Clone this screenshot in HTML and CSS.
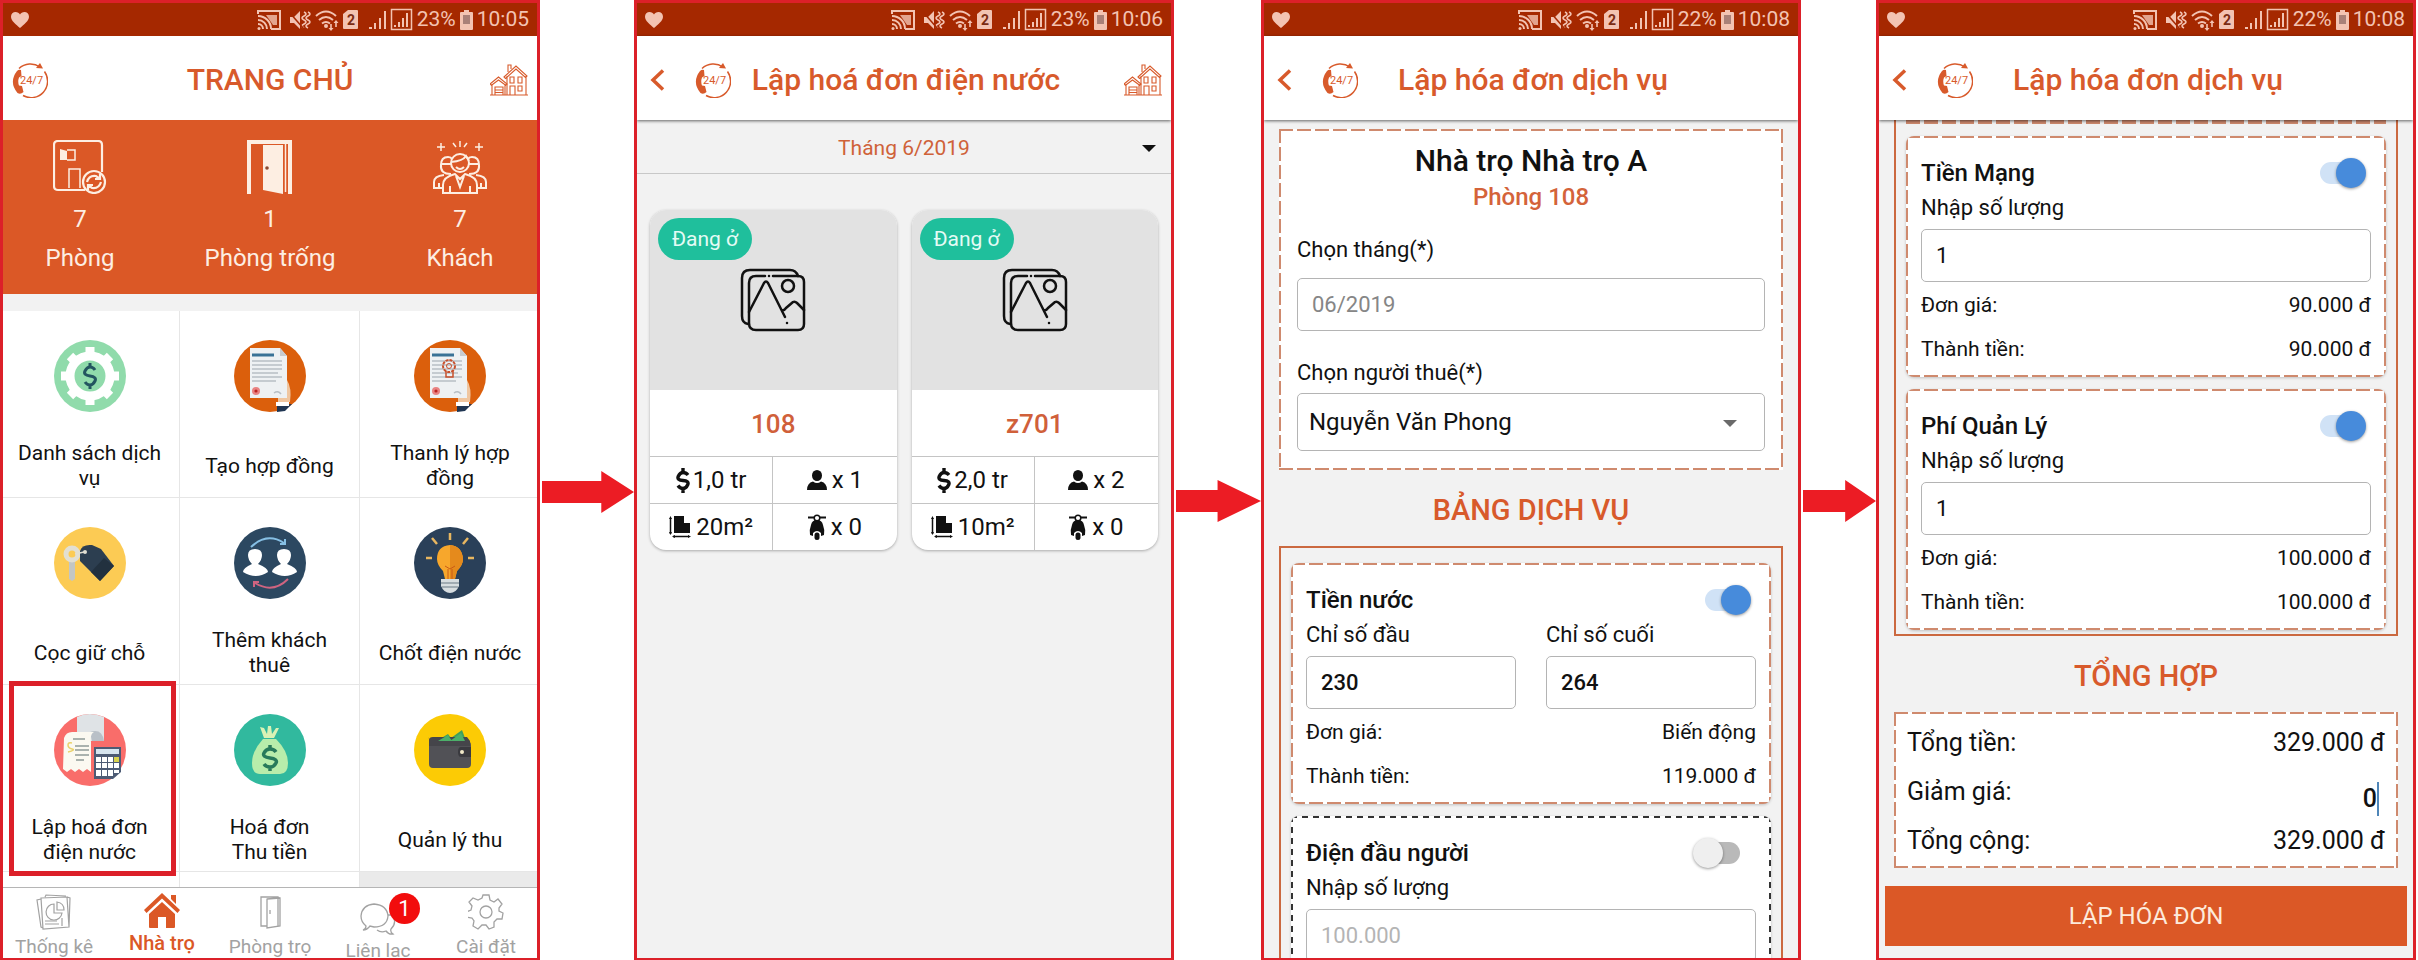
FILE: index.html
```html
<!DOCTYPE html>
<html lang="vi">
    <head>
        <meta charset="utf-8">
        <title>Lập hoá đơn điện nước</title>
        <link rel="stylesheet" href="styles.css">
    </head>

    <body>
        <!-- SHARED ICONS -->
        <svg class="sprite" aria-hidden="true">
            <symbol id="i-heart" viewBox="0 0 18 16">
                <path fill="currentColor" d="M9 16C5 12.500 0 9 0 4.800 0 2 2 0 4.600 0 6.500 0 8.200 1 9 2.600 9.800 1 11.500 0 13.400 0 16 0 18 2 18 4.800 18 9 13 12.500 9 16z"/>
            </symbol>
            <symbol id="i-status" viewBox="0 0 156 24">
                <g fill="none" stroke="currentColor" stroke-width="2">
                    <path d="M1 6V3h22v18h-9"/>
                    <path d="M1 12a9 9 0 0 1 9 9M1 16a5 5 0 0 1 5 5" />
                    <path d="M1 8a13 13 0 0 1 13 13"/>
                    <path d="M47 4q4 2 0 4t0 4 0 4 0 4M51 4q4 2 0 4t0 4 0 4 0 4" stroke-width="1.600"/>
                    <path d="M59 8q10-9 20 0M62 12q7-6 14 0M65 15.500q4-3 8 0"/>
                    <path d="M74 16v5M79 14v5" stroke-width="1.600"/>
                    <rect x="134.500" y="1.500" width="20" height="20" stroke-width="1.500"/>
                </g>
                <g fill="currentColor">
                    <path d="M9 7h11v10h-4z" opacity=".8"/>
                    <circle cx="2" cy="20.500" r="1.500"/>
                    <path d="M33 9h4l6-6v18l-6-6h-4z"/>
                    <circle cx="69" cy="18" r="2"/>
                    <path d="M71.500 20h5l-2.500 3zM76.500 15h5L79 12z"/>
                    <path d="M91 2h9a1 1 0 0 1 1 1v17a1 1 0 0 1-1 1H87a1 1 0 0 1-1-1V6z"/>
                    <path d="M112 19h3v2h-3zM117 15h2v6h-2zM122 10h2v11h-2zM127 3h2v18h-2z"/>
                    <path d="M137 17h2v2h-2zM141 14h2v5h-2zM145 10h2v9h-2zM149 5h2v14h-2z"/>
                </g>
                <path d="M32 4l15 17" stroke="#a52800" stroke-width="1.500"/>
                <text x="90" y="17" font-family="Roboto, sans-serif" font-size="14" font-weight="700" fill="#7b2b12">2</text>
            </symbol>
            <symbol id="i-battery" viewBox="0 0 13 20">
                <path fill="currentColor" d="M4 0h5v2h3a1 1 0 0 1 1 1v16a1 1 0 0 1-1 1H1a1 1 0 0 1-1-1V3a1 1 0 0 1 1-1h3z"/>
                <path fill="#a98078" d="M3 5h7v9H3z"/>
            </symbol>
            <symbol id="i-back" viewBox="0 0 15 22">
                <path d="M13 1.500L3 11l10 9.500" fill="none" stroke="currentColor" stroke-width="3.500"/>
            </symbol>
            <symbol id="i-support" viewBox="0 0 36 36">
                <path d="M7 6.500a16.500 16.500 0 0 1 21-1.500M32.500 9.500a16.500 16.500 0 0 1-21.500 24" fill="none" stroke="currentColor" stroke-width="1.500"/>
                <path d="M24 6l7 .5L28 1z" fill="currentColor"/>
                <path d="M5 9q2-2 4-1l.5 6-2.500 1.500q-1.500 4 0 8l3 .5 1.500 6q-3 3-6 1-9-11-.5-22z" fill="currentColor"/>
                <text x="8" y="22" font-family="Roboto, sans-serif" font-size="11" fill="currentColor">24/7</text>
            </symbol>
            <symbol id="i-houses" viewBox="0 0 38 32">
                <g fill="none" stroke="currentColor" stroke-width="1.100">
                    <path d="M0 31h38M17 31V12M36 31V12M14 13L26 2l11 10-1.500 1.500L26 5 15.500 14.500zM18 8V1h3v4"/>
                    <path d="M2 31V20M15 31V20M0 20l8.500-7 8.500 7-1.300 1.300L8.500 16l-7 5.300zM5 31v-8h8v8M5 26h8M5 28.500h8"/>
                    <path d="M20 13h4v6h-4zM28 13h4v6h-4zM28 22h4v5h-4zM20 31v-9h5v9"/>
                </g>
            </symbol>
            <symbol id="i-photo" viewBox="0 0 66 64">
                <g fill="none" stroke="currentColor" stroke-width="2.500" stroke-linejoin="round" stroke-linecap="round">
                    <path d="M8 56Q2 55 2 48V10q0-8 8-8h40q6 0 8 6"/>
                    <path d="M25 8h-9q-7 0-7 7v40q0 7 7 7h42q6 0 6-6V14q0-6-6-6H33M29 8h0"/>
                    <path d="M9 44l15-29q2-3 4 0l17 34M42 42q2 1 4-2l7-6q2-1 4 1l7 7M47 55h0"/>
                    <circle cx="48" cy="18" r="6"/>
                </g>
            </symbol>
            <symbol id="i-dollar" viewBox="0 0 14 25">
                <path d="M12 7Q10 4.500 7 4.500T2.300 8.300 7 12.500t4.700 4.200T7 20.500 2 17.500M7 0v5M7 20v5" fill="none" stroke="currentColor" stroke-width="3.400"/>
            </symbol>
            <symbol id="i-person" viewBox="0 0 20 20">
                <ellipse cx="10" cy="5.500" rx="5" ry="5.500" fill="currentColor"/>
                <path d="M0 20q0-7 6-8.500 4 3 8 0 6 1.500 6 8.500z" fill="currentColor"/>
            </symbol>
            <symbol id="i-area" viewBox="0 0 22 22">
                <path d="M5 0h10v7h6v10H5z" fill="currentColor"/>
                <path d="M1.500 2v16M4 20.500h16" stroke="currentColor" stroke-width="1.500"/>
                <path d="M0 3l1.500-3L3 3zM0 16l1.500 3L3 16zM6 19l-3 1.500L6 22zM19 19l3 1.500-3 1.500z" fill="currentColor"/>
            </symbol>
            <symbol id="i-bike" viewBox="0 0 18 26">
                <path d="M0 3.500h18" stroke="currentColor" stroke-width="2"/>
                <path d="M9 6q5 0 6 5 2 5 1 10l-3 1v-3q-4-4-8 0v3l-3-1Q1 16 3 11q1-5 6-5z" fill="currentColor"/>
                <circle cx="9" cy="4" r="2.800" fill="#fff" stroke="currentColor" stroke-width="1.500"/>
                <rect x="6.500" y="18.500" width="5" height="7.500" rx="2.500" fill="currentColor"/>
            </symbol>
            <symbol id="i-contract" viewBox="0 0 72 72">
                <circle cx="36" cy="36" r="36" fill="#db5f0c"/>
                <path d="M43 65l15-1-7 7-8 1z" fill="#1f3552"/>
                <path d="M42 62h13v4H42z" fill="#fff"/>
                <path d="M44 62V44l7-8 2 4q5 8 3 22z" fill="#f0c6a0"/>
                <path d="M16 8h30l7 8v42H16z" fill="#eef1f3"/>
                <path d="M46 8v8h7z" fill="#c7ccd0"/>
                <path d="M18 15h22" stroke="#3a7296" stroke-width="3"/>
                <path d="M18 21h30M18 25h30M18 29h30M18 33h26M18 37h30M18 41h24M40 53q4-3 7 1" stroke="#b8bfc5" stroke-width="1.500" fill="none"/>
                <circle cx="22" cy="51" r="4" fill="#e98282"/>
                <circle cx="22" cy="51" r="1.600" fill="#b22"/>
            </symbol>
        </svg>

        <main class="steps">
            <!-- STEP 1: HOME -->
            <section class="phone">
                <div class="statusbar">
                    <svg class="heart"><use href="#i-heart"/></svg>
                    <div class="status-right">
                        <svg class="status-icons"><use href="#i-status"/></svg>
                        <span>23%</span>
                        <svg class="battery"><use href="#i-battery"/></svg>
                        <span>10:05</span>
                    </div>
                </div>
                <header class="appbar appbar-home">
                    <div class="appbar-left">
                        <a href="#support" aria-label="Hỗ trợ 24/7"><svg class="support"><use href="#i-support"/></svg></a>
                    </div>
                    <h1>TRANG CHỦ</h1>
                    <div class="appbar-right">
                        <a href="#houses" aria-label="Nhà trọ"><svg class="houses"><use href="#i-houses"/></svg></a>
                    </div>
                </header>

                <div class="stats">
                    <div class="stat">
                        <svg viewBox="0 0 54 54" fill="none" stroke="currentColor" stroke-width="2.200">
                            <path d="M32 50H5q-4 0-4-4V5q0-4 4-4h40q4 0 4 4v27"/>
                            <path d="M14 10h8v10h-8M16 48V29h11v19" stroke-width="1.500"/>
                            <path d="M7 9l7 2v9H7z" fill="currentColor" stroke="none"/>
                            <circle cx="41" cy="42" r="11"/>
                            <path d="M34 42q2-7 9-6l4 3M48 42q-2 7-9 6l-4-3M47 34v5h-5M35 50v-5h5"/>
                        </svg>
                        <span>7</span>
                        <span>Phòng</span>
                    </div>
                    <div class="stat">
                        <svg viewBox="0 0 54 54">
                            <path d="M6 54V2h41v52" fill="none" stroke="currentColor" stroke-width="4"/>
                            <path d="M20 50V5l20 0v49z" fill="currentColor"/>
                            <path d="M42.500 4v48" stroke="currentColor" stroke-width="1.500"/>
                            <circle cx="24" cy="28" r="1.800" fill="#8a4a32"/>
                        </svg>
                        <span>1</span>
                        <span>Phòng trống</span>
                    </div>
                    <div class="stat">
                        <svg viewBox="0 0 54 54" fill="none" stroke="currentColor" stroke-width="2">
                            <path d="M8 3v8M4 7h8M46 3v8M42 7h8M27 1v6M20 3l3 4M34 3l-3 4" stroke-width="1.500"/>
                            <circle cx="27" cy="23" r="9"/>
                            <path d="M18 22q12-1 15-6l3 5M23 27q4 4 8 0"/>
                            <path d="M18 34q-11 0-10-9 0-8 7-8 3 0 4 2M9 24h9M36 34q11 0 10-9 0-8-7-8-3 0-4 2M36 24h9"/>
                            <path d="M10 53V45q0-8 12-11l5 5 5-5q12 3 12 11v8zM17 53v-7M37 53v-7M23 36l4 11 4-11"/>
                            <path d="M10 48H1v-6q0-6 10-7M44 48h9v-6q0-6-10-7M6 48v-5M48 48v-5"/>
                        </svg>
                        <span>7</span>
                        <span>Khách</span>
                    </div>
                </div>

                <nav class="menu">
                    <a href="#services" class="menu-item">
                        <svg viewBox="0 0 72 72">
                            <circle cx="36" cy="36" r="36" fill="#90dbab"/>
                            <circle cx="36" cy="36" r="20" fill="none" stroke="#fff" stroke-width="9"/>
                            <g stroke="#fff" stroke-width="9">
                                <path d="M36 7v8M36 57v8M7 36h8M57 36h8M16 16l5 5M51 51l5 5M56 16l-5 5M21 51l-5 5"/>
                            </g>
                            <path d="M41 30q-2-3-5-3t-5 4 5 5 5 5-5 4-5-3M36 23v5M36 44v5" fill="none" stroke="#235560" stroke-width="3"/>
                        </svg>
                        <span>Danh sách dịch vụ</span>
                    </a>
                    <a href="#contract" class="menu-item">
                        <svg><use href="#i-contract"/></svg>
                        <span>Tạo hợp đồng</span>
                    </a>
                    <a href="#liquidate" class="menu-item">
                        <svg viewBox="0 0 72 72">
                            <use href="#i-contract"/>
                            <circle cx="35" cy="26" r="6" fill="none" stroke="#c8502c" stroke-width="2" stroke-dasharray="3 1"/>
                            <circle cx="35" cy="26" r="2.500" fill="none" stroke="#c8502c"/>
                            <path d="M32 31v6h7v-6" fill="none" stroke="#c8502c" stroke-width="1.500"/>
                        </svg>
                        <span>Thanh lý hợp đồng</span>
                    </a>
                    <a href="#deposit" class="menu-item">
                        <svg viewBox="0 0 72 72">
                            <circle cx="36" cy="36" r="36" fill="#fccb54"/>
                            <path d="M15 33h6v19l-3 2-3-2z" fill="#c3c6c4"/>
                            <circle cx="18" cy="27" r="6" fill="none" stroke="#e2dfd2" stroke-width="5"/>
                            <path d="M26 24q2-7 12-6l9 4L60 39 46 54 26 34z" fill="#2c3e50"/>
                            <path d="M60 39L46 54 37 45 50 31z" fill="#22313f"/>
                            <path d="M21 27l9-2" stroke="#e2dfd2" stroke-width="1.500"/>
                            <circle cx="31" cy="25" r="2" fill="#e2dfd2"/>
                        </svg>
                        <span>Cọc giữ chỗ</span>
                    </a>
                    <a href="#tenants" class="menu-item">
                        <svg viewBox="0 0 72 72">
                            <circle cx="36" cy="36" r="36" fill="#2c4861"/>
                            <path d="M9 45q0-4 9-8-4-4-4-9 0-6 7-6t7 6q0 5-4 9 10 4 10 8-12 8-25 0zM38 45q0-4 9-8-4-4-4-9 0-6 7-6t7 6q0 5-4 9 10 4 10 8-12 8-25 0z" fill="#fff"/>
                            <path d="M17 20q16-15 33-4M51 12v5h-5" fill="none" stroke="#86bfe4" stroke-width="2"/>
                            <path d="M54 52q-15 15-33 4M20 60v-5h5" fill="none" stroke="#cf6480" stroke-width="2"/>
                        </svg>
                        <span>Thêm khách thuê</span>
                    </a>
                    <a href="#meter" class="menu-item">
                        <svg viewBox="0 0 72 72">
                            <circle cx="36" cy="36" r="36" fill="#2a4059"/>
                            <path d="M36 6v7M18 11l5 6M54 11l-5 6M12 31h6M54 31h6" stroke="#e8b660" stroke-width="2.500"/>
                            <path d="M36 18q-13 1-13 14 0 6 6 12l2 8h10l2-8q6-6 6-12-1-13-13-14z" fill="#f7a72c"/>
                            <path d="M36 18v34h5l2-8q6-6 6-12-1-13-13-14z" fill="#e58a1c"/>
                            <path d="M31 39l5 3 5-3M34 42v10M38 42v10" stroke="#ca5a15" fill="none"/>
                            <path d="M27 52h18v7q-3 7-9 7t-9-7z" fill="#d7dde0"/>
                            <path d="M27 56h18M28 60h16" stroke="#8f9aa2" stroke-width="1.500"/>
                        </svg>
                        <span>Chốt điện nước</span>
                    </a>
                    <a href="#invoice" class="menu-item menu-item-marked">
                        <svg viewBox="0 0 72 72">
                            <circle cx="36" cy="36" r="36" fill="#f96d6a"/>
                            <path d="M23 3q12-6 27 0v24H23z" fill="#dfe3e6"/>
                            <path d="M36 18q12-4 14 9H38z" fill="#b9c0c7"/>
                            <path d="M10 24q2-6 8-6h22q-4 2-3 10v30l-4-3-4 3-4-3-4 3-4-3-4 3-4-3z" fill="#fbf9f1"/>
                            <path d="M19 25h12M21 32h14M21 36h14M21 41h14M22 46h8" stroke="#909a98" stroke-width="1.300"/>
                            <path d="M18 29q-4-1-4 2t4 4-4 3" fill="none" stroke="#ead26b" stroke-width="1.500"/>
                            <path d="M40 33h27v25l-8 7H40z" fill="#4d5b74"/>
                            <path d="M42 35h23v5H42z" fill="#d7e5ef"/>
                            <path d="M42 43h5v5h-5zM48 43h5v5h-5zM54 43h5v5h-5zM42 49h5v5h-5zM48 49h5v5h-5zM54 49h5v5h-5zM60 49h5v5h-5zM42 56h5v6h-5zM48 56h5v6h-5zM54 56h5v6h-5zM60 56h5v3h-5z" fill="#fff"/>
                            <path d="M60 43h5v5h-5z" fill="#d9d34d"/>
                        </svg>
                        <span>Lập hoá đơn điện nước</span>
                    </a>
                    <a href="#receipts" class="menu-item">
                        <svg viewBox="0 0 72 72">
                            <circle cx="36" cy="36" r="36" fill="#31b99e"/>
                            <path d="M30 24L26 13l4 1 3 6 1-8h3l1 8 4-6 3 0-5 10z" fill="#d9f2b5"/>
                            <path d="M29 25h13q12 12 12 24 0 11-8 11H26q-8 0-8-11 0-12 11-24z" fill="#b8edab"/>
                            <path d="M42 38q-2-3-6-3t-6 4 6 5 6 5-6 4-6-3M36 31v4M36 53v4" fill="none" stroke="#287a5b" stroke-width="3.500"/>
                        </svg>
                        <span>Hoá đơn<br>Thu tiền</span>
                    </a>
                    <a href="#income" class="menu-item">
                        <svg viewBox="0 0 72 72">
                            <circle cx="36" cy="36" r="36" fill="#fccb05"/>
                            <path d="M24 26l10-6 3 4 11-8 3 8v8H24z" fill="#3f9f5c"/>
                            <path d="M15 23q-1 4 4 4h34q4 0 4 4v19q0 4-4 4H19q-4 0-4-4z" fill="#515156"/>
                            <path d="M15 26q0-3 4-3h34l3 4v5H15z" fill="#45454a"/>
                            <path d="M24 27l10-6 4 6zM36 27l11-8 4 8z" fill="#4caf6a"/>
                            <path d="M57 33H47q-3 0-3 5t3 5h10z" fill="#3a3a3f"/>
                            <circle cx="48" cy="38" r="2" fill="#f1e9c9"/>
                        </svg>
                        <span>Quản lý thu</span>
                    </a>
                    <div class="menu-item"></div>
                    <div class="menu-item"></div>
                </nav>

                <nav class="tabs">
                    <a href="#stats">
                        <svg viewBox="0 0 36 36" fill="none" stroke="currentColor" stroke-width="1.200">
                            <path d="M5 4l26-1 2 30-26 2zM5 5L1 6l4 27 2 1M9 3l1-2 20 1M31 3l3 1-1 29M9 27h12M9 30h14M26 24v8"/>
                            <path d="M18 10a8 8 0 1 0 8 9h-8zM21 8v8h7q0-7-7-8z"/>
                        </svg>
                        <span>Thống kê</span>
                    </a>
                    <a href="#home" class="active">
                        <svg viewBox="0 0 36 36" fill="currentColor">
                            <path d="M18 0l18 17-2.500 3L18 5.500 2.500 20 0 17zM27 2h5v9l-5-5z"/>
                            <path d="M18 9l13 12v13q0 1-1 1h-8V24h-8v11H6q-1 0-1-1V21z"/>
                        </svg>
                        <span>Nhà trọ</span>
                    </a>
                    <a href="#rooms">
                        <svg viewBox="0 0 36 36" fill="none" stroke="currentColor" stroke-width="1.300">
                            <path d="M15 32h-6V3h17v29M15 5v29l13-2V4zM15 5l13-1M18 16v4"/>
                        </svg>
                        <span>Phòng trọ</span>
                    </a>
                    <a href="#contact" class="tab-contact">
                        <svg viewBox="0 0 36 36" fill="none" stroke="currentColor" stroke-width="1.300">
                            <path d="M6 26q-5-4-5-10Q2 5 14 4q13 1 14 12-1 11-14 11l-4-1q-3 4-7 4 3-1 3-4z"/>
                            <path d="M17 30q4 3 9 1 3 4 7 3-3-2-2-5 6-6 2-13M28 15h5"/>
                        </svg>
                        <span>Liên lạc</span>
                        <b class="count">1</b>
                    </a>
                    <a href="#settings">
                        <svg viewBox="0 0 36 36" fill="none" stroke="currentColor" stroke-width="1.300">
                            <path d="M15 1h6l1 5 4 2 4-3 4 5-3 4v3l4 2-1 6-5 0-3 3 0 5-5 2-3-4-4 0-4 4-5-3 1-5-2-3-6-1V18l5-2 1-4-3-4 4-4 5 2 4-2z"/>
                            <circle cx="18" cy="18" r="6"/>
                        </svg>
                        <span>Cài đặt</span>
                    </a>
                </nav>
            </section>

            <svg class="arrow arrow-first" viewBox="0 0 90 42" preserveAspectRatio="none"><path d="M0 10h58V0l32 21-32 21V32H0z"/></svg>

            <!-- STEP 2: PICK A ROOM -->
            <section class="phone">
                <div class="statusbar">
                    <svg class="heart"><use href="#i-heart"/></svg>
                    <div class="status-right">
                        <svg class="status-icons"><use href="#i-status"/></svg>
                        <span>23%</span>
                        <svg class="battery"><use href="#i-battery"/></svg>
                        <span>10:06</span>
                    </div>
                </div>
                <header class="appbar">
                    <div class="appbar-left">
                        <a href="#back" aria-label="Quay lại"><svg class="back"><use href="#i-back"/></svg></a>
                        <a href="#support" aria-label="Hỗ trợ 24/7"><svg class="support"><use href="#i-support"/></svg></a>
                    </div>
                    <h1>Lập hoá đơn điện nước</h1>
                    <div class="appbar-right">
                        <a href="#houses" aria-label="Nhà trọ"><svg class="houses"><use href="#i-houses"/></svg></a>
                    </div>
                </header>

                <div class="month">
                    <select aria-label="Tháng">
                        <option>Tháng 6/2019</option>
                    </select>
                    <svg class="caret" viewBox="0 0 14 7"><path d="M0 0h14L7 7z" fill="currentColor"/></svg>
                </div>

                <div class="rooms">
                    <article class="room">
                        <div class="room-photo">
                            <span class="room-state">Đang ở</span>
                            <svg><use href="#i-photo"/></svg>
                        </div>
                        <h2>108</h2>
                        <div class="room-facts">
                            <span><svg class="i-dollar"><use href="#i-dollar"/></svg>1,0 tr</span>
                            <span><svg class="i-person"><use href="#i-person"/></svg>x 1</span>
                            <span><svg class="i-area"><use href="#i-area"/></svg>20m²</span>
                            <span><svg class="i-bike"><use href="#i-bike"/></svg>x 0</span>
                        </div>
                    </article>
                    <article class="room">
                        <div class="room-photo">
                            <span class="room-state">Đang ở</span>
                            <svg><use href="#i-photo"/></svg>
                        </div>
                        <h2>z701</h2>
                        <div class="room-facts">
                            <span><svg class="i-dollar"><use href="#i-dollar"/></svg>2,0 tr</span>
                            <span><svg class="i-person"><use href="#i-person"/></svg>x 2</span>
                            <span><svg class="i-area"><use href="#i-area"/></svg>10m²</span>
                            <span><svg class="i-bike"><use href="#i-bike"/></svg>x 0</span>
                        </div>
                    </article>
                </div>
            </section>

            <svg class="arrow" viewBox="0 0 90 42" preserveAspectRatio="none"><path d="M0 10h44V0l46 21-46 21V32H0z"/></svg>

            <!-- STEP 3: FILL THE INVOICE -->
            <section class="phone">
                <div class="statusbar">
                    <svg class="heart"><use href="#i-heart"/></svg>
                    <div class="status-right">
                        <svg class="status-icons"><use href="#i-status"/></svg>
                        <span>22%</span>
                        <svg class="battery"><use href="#i-battery"/></svg>
                        <span>10:08</span>
                    </div>
                </div>
                <header class="appbar">
                    <div class="appbar-left">
                        <a href="#back" aria-label="Quay lại"><svg class="back"><use href="#i-back"/></svg></a>
                        <a href="#support" aria-label="Hỗ trợ 24/7"><svg class="support"><use href="#i-support"/></svg></a>
                    </div>
                    <h1>Lập hóa đơn dịch vụ</h1>
                    <div class="appbar-right"></div>
                </header>

                <form class="invoice">
                    <div class="dashed tenant">
                        <h2>Nhà trọ Nhà trọ A</h2>
                        <h3>Phòng 108</h3>
                        <label for="month">Chọn tháng(*)</label>
                        <input id="month" class="box box-month" type="text" value="06/2019">
                        <label for="tenant">Chọn người thuê(*)</label>
                        <div class="select">
                            <select id="tenant" class="box">
                                <option>Nguyễn Văn Phong</option>
                            </select>
                            <svg class="caret" viewBox="0 0 14 7"><path d="M0 0h14L7 7z" fill="currentColor"/></svg>
                        </div>
                    </div>

                    <h2 class="section-title">BẢNG DỊCH VỤ</h2>

                    <div class="services">
                        <div class="dashed service">
                            <div class="service-head">
                                <label for="water">Tiền nước</label>
                                <input id="water" class="switch" type="checkbox" checked>
                            </div>
                            <div class="fields">
                                <div>
                                    <label for="from">Chỉ số đầu</label>
                                    <input id="from" class="box strong" type="text" value="230">
                                </div>
                                <div>
                                    <label for="to">Chỉ số cuối</label>
                                    <input id="to" class="box strong" type="text" value="264">
                                </div>
                            </div>
                            <div class="line"><span>Đơn giá:</span><span>Biến động</span></div>
                            <div class="line"><span>Thành tiền:</span><span>119.000 đ</span></div>
                        </div>
                        <div class="dashed dashed-off service">
                            <div class="service-head">
                                <label for="power">Điện đầu người</label>
                                <input id="power" class="switch" type="checkbox">
                            </div>
                            <div class="fields">
                                <div>
                                    <label for="power-count">Nhập số lượng</label>
                                    <input id="power-count" class="box" type="text" placeholder="100.000">
                                </div>
                            </div>
                        </div>
                    </div>
                </form>
            </section>

            <svg class="arrow" viewBox="0 0 90 42" preserveAspectRatio="none"><path d="M0 10h52V0l38 21-38 21V32H0z"/></svg>

            <!-- STEP 4: TOTAL -->
            <section class="phone">
                <div class="statusbar">
                    <svg class="heart"><use href="#i-heart"/></svg>
                    <div class="status-right">
                        <svg class="status-icons"><use href="#i-status"/></svg>
                        <span>22%</span>
                        <svg class="battery"><use href="#i-battery"/></svg>
                        <span>10:08</span>
                    </div>
                </div>
                <header class="appbar">
                    <div class="appbar-left">
                        <a href="#back" aria-label="Quay lại"><svg class="back"><use href="#i-back"/></svg></a>
                        <a href="#support" aria-label="Hỗ trợ 24/7"><svg class="support"><use href="#i-support"/></svg></a>
                    </div>
                    <h1>Lập hóa đơn dịch vụ</h1>
                    <div class="appbar-right"></div>
                </header>

                <form class="invoice invoice-end">
                    <div class="services services-end">
                        <!-- bottom edge of the service scrolled under the header -->
                        <div class="dashed service-tail"></div>
                        <div class="dashed service">
                            <div class="service-head">
                                <label for="net">Tiền Mạng</label>
                                <input id="net" class="switch" type="checkbox" checked>
                            </div>
                            <div class="fields">
                                <div>
                                    <label for="net-count">Nhập số lượng</label>
                                    <input id="net-count" class="box" type="text" value="1">
                                </div>
                            </div>
                            <div class="line"><span>Đơn giá:</span><span>90.000 đ</span></div>
                            <div class="line"><span>Thành tiền:</span><span>90.000 đ</span></div>
                        </div>
                        <div class="dashed service">
                            <div class="service-head">
                                <label for="fee">Phí Quản Lý</label>
                                <input id="fee" class="switch" type="checkbox" checked>
                            </div>
                            <div class="fields">
                                <div>
                                    <label for="fee-count">Nhập số lượng</label>
                                    <input id="fee-count" class="box" type="text" value="1">
                                </div>
                            </div>
                            <div class="line"><span>Đơn giá:</span><span>100.000 đ</span></div>
                            <div class="line"><span>Thành tiền:</span><span>100.000 đ</span></div>
                        </div>
                    </div>

                    <h2 class="section-title">TỔNG HỢP</h2>

                    <div class="dashed summary">
                        <div class="sum"><span>Tổng tiền:</span><span>329.000 đ</span></div>
                        <div class="sum">
                            <label for="discount">Giảm giá:</label>
                            <div class="discount">
                                <input id="discount" type="text" value="0">
                                <i class="cursor"></i>
                            </div>
                        </div>
                        <div class="sum"><span>Tổng cộng:</span><span>329.000 đ</span></div>
                    </div>

                    <button class="submit" type="button">LẬP HÓA ĐƠN</button>
                </form>
            </section>
        </main>
    </body>
</html>
```
FILE: styles.css
```css
*{
    box-sizing: border-box;
}

body{
    margin: 0;
    background: #fff;
    color: #111;
    font-family: Roboto, "Noto Sans", sans-serif;
    font-size: 22px;
    line-height: 25px;
}

h1, h2, h3{
    margin: 0;
    font-weight: 500;
    text-align: center;
}

a{
    color: inherit;
    text-decoration: none;
}

svg{
    display: block;
    flex: none;
}

input, select, button{
    font: inherit;
    color: inherit;
}

.sprite{
    display: none;
}

.steps{
    display: grid;
    grid-template-columns: 540fr 94fr 540fr 87fr 540fr 75fr 540fr;
    padding-right: 2px;
}

.phone{
    display: flex;
    flex-direction: column;
    height: 100vh;
    overflow: hidden;
    border: 3px solid #dc2029;
    border-bottom-width: 2px;
    background: #f2f2f2;
}

.arrow{
    width: 100%;
    height: 42px;
    margin-top: 480px;
    padding-left: 2px;
    fill: #ec1c24;
}

.arrow-first{
    margin-top: 471px;
}

/* status bar */
.statusbar{
    display: flex;
    flex: none;
    align-items: center;
    justify-content: space-between;
    height: 33px;
    padding: 0 8px;
    background: #a52800;
    color: #f3c3b2;
    font-size: 21px;
}

.heart{
    width: 18px;
    height: 16px;
}

.status-right{
    display: flex;
    align-items: center;
    gap: 4px;
}

.status-icons{
    width: 156px;
    height: 24px;
}

.battery{
    width: 13px;
    height: 20px;
}

/* header */
.appbar{
    display: grid;
    flex: none;
    grid-template-columns: 1fr auto 1fr;
    align-items: center;
    position: relative;
    height: 84px;
    padding: 3px 9px 0 13px;
    background: #fff;
    box-shadow: 0 1px 3px rgba(0, 0, 0, .6);
    color: #d85a2b;
}

.appbar h1{
    font-size: 30px;
    line-height: 36px;
}

.appbar-left{
    display: flex;
    align-items: center;
    gap: 30px;
}

.appbar-right{
    display: flex;
    justify-content: flex-end;
}

.appbar-home{
    padding-left: 9px;
    box-shadow: none;
}

.back{
    width: 15px;
    height: 22px;
}

.support{
    width: 36px;
    height: 36px;
}

.houses{
    width: 38px;
    height: 32px;
}

/* home */
.stats{
    display: flex;
    flex: none;
    justify-content: space-between;
    height: 174px;
    padding: 20px 12px 0;
    background: #db5826;
    color: #fdeee2;
    font-size: 24px;
    line-height: 28px;
}

.stat{
    display: flex;
    flex-direction: column;
    align-items: center;
    gap: 11px;
    width: 130px;
    white-space: nowrap;
}

.stat svg{
    width: 54px;
    height: 54px;
}

.menu{
    display: grid;
    flex: 1;
    grid-template-columns: repeat(3, 1fr);
    grid-auto-rows: 187px;
    min-height: 0;
    margin: 17px -3px 0;
    overflow: hidden;
    background: #eaeaea;
    font-size: 21px;
}

.menu-item{
    display: flex;
    flex-direction: column;
    align-items: center;
    justify-content: space-between;
    position: relative;
    padding: 29px 14px 6px;
    border-right: 1px solid #e6e6e6;
    border-bottom: 1px solid #e6e6e6;
    background: #fff;
    text-align: center;
}

.menu-item:nth-child(3n){
    border-right: 0;
}

.menu-item svg{
    width: 72px;
    height: 72px;
}

.menu-item span{
    display: flex;
    align-items: center;
    min-height: 50px;
}

.menu-item-marked::after{
    content: "";
    position: absolute;
    inset: -4px 3px -5px 9px;
    z-index: 1;
    border: 5px solid #dc2029;
}

.tabs{
    display: grid;
    flex: none;
    grid-template-columns: repeat(5, 1fr);
    height: 71px;
    margin: 0 -3px;
    border-top: 1px solid #b5b5b5;
    background: #fff;
    color: #a2a2a2;
    font-size: 19px;
}

.tabs a{
    display: flex;
    flex-direction: column;
    align-items: center;
    gap: 4px;
    position: relative;
    padding-top: 6px;
}

.tabs svg{
    width: 36px;
    height: 36px;
}

.tabs .active{
    gap: 2px;
    padding-top: 5px;
    color: #db5826;
    font-size: 20px;
    font-weight: 500;
}

.tabs .tab-contact{
    gap: 2px;
    padding-top: 12px;
}

.count{
    position: absolute;
    top: 5px;
    left: 65px;
    width: 31px;
    height: 31px;
    border-radius: 50%;
    background: #f20d0d;
    color: #fff;
    font-size: 22px;
    font-weight: 400;
    line-height: 31px;
    text-align: center;
}

/* room list */
.month{
    position: relative;
    flex: none;
    height: 54px;
    border-bottom: 1px solid #c8c8c8;
    font-size: 21px;
}

.month select{
    width: 100%;
    height: 100%;
    padding-top: 3px;
    border: 0;
    appearance: none;
    background: none;
    color: #cf6239;
    text-align-last: center;
}

.caret{
    position: absolute;
    top: 50%;
    right: 15px;
    width: 14px;
    height: 7px;
    margin-top: -2px;
    pointer-events: none;
}

.rooms{
    display: grid;
    grid-template-columns: 1fr 1fr;
    gap: 15px;
    padding: 36px 13px 0;
}

.room{
    overflow: hidden;
    border-radius: 16px;
    background: #fff;
    box-shadow: 0 1px 3px rgba(0, 0, 0, .3);
}

.room-photo{
    display: flex;
    align-items: center;
    justify-content: center;
    position: relative;
    height: 180px;
    background: #e2e2e2;
}

.room-photo svg{
    width: 66px;
    height: 64px;
}

.room-state{
    position: absolute;
    top: 8px;
    left: 8px;
    padding: 0 14px;
    border-radius: 21px;
    background: #1fbf9c;
    color: #e4fbf5;
    font-size: 21px;
    line-height: 42px;
}

.room h2{
    padding-top: 3px;
    color: #d0603a;
    font-size: 26px;
    line-height: 63px;
}

.room-facts{
    display: grid;
    grid-template-columns: 1fr 1fr;
    font-size: 24px;
}

.room-facts span{
    display: flex;
    align-items: center;
    justify-content: center;
    gap: 5px;
    height: 47px;
    border-top: 1px solid #c4c4c4;
}

.room-facts span:nth-child(odd){
    border-right: 1px solid #c4c4c4;
}

.room-facts .i-dollar{
    width: 14px;
    height: 25px;
    margin-right: -2px;
}

.i-person{
    width: 20px;
    height: 20px;
}

.i-area{
    width: 22px;
    height: 22px;
}

.i-bike{
    width: 18px;
    height: 26px;
}

/* invoice form */
.invoice{
    padding: 9px 15px 0;
}

.invoice-end{
    padding-top: 0;
}

.dashed{
    --dash: #cf8a6e;
    --len: 14px;
    --step: 18px;
    background:
        repeating-linear-gradient(90deg, var(--dash) 0 var(--len), transparent var(--len) var(--step)) top / 100% 2px no-repeat,
        repeating-linear-gradient(90deg, var(--dash) 0 var(--len), transparent var(--len) var(--step)) bottom / 100% 2px no-repeat,
        repeating-linear-gradient(var(--dash) 0 var(--len), transparent var(--len) var(--step)) left / 2px 100% no-repeat,
        repeating-linear-gradient(var(--dash) 0 var(--len), transparent var(--len) var(--step)) right / 2px 100% no-repeat,
        #fff;
}

.dashed-off{
    --dash: #333;
    --len: 6px;
    --step: 11px;
}

.box{
    display: block;
    width: 100%;
    height: 53px;
    padding: 0 14px;
    border: 1px solid #b4b4b4;
    border-radius: 5px;
    background: #fff;
}

.box::placeholder{
    color: #b4b4b4;
}

.strong{
    font-weight: 500;
}

.tenant{
    display: flex;
    flex-direction: column;
    padding: 14px 18px 19px;
}

.tenant h2{
    font-size: 30px;
    line-height: 36px;
}

.tenant h3{
    margin: 4px 0 26px;
    color: #d4633a;
    font-size: 24px;
    line-height: 28px;
}

.tenant label{
    margin-bottom: 8px;
}

.tenant .box-month{
    margin: 8px 0 29px;
    color: #868686;
}

.select{
    position: relative;
}

.select select{
    height: 58px;
    padding: 0 11px;
    appearance: none;
    font-size: 24px;
}

.select .caret{
    right: 28px;
    color: #6a6a6a;
}

.section-title{
    margin: 22px 0 18px;
    color: #d85a2b;
    font-size: 29px;
    line-height: 36px;
}

.services{
    display: flex;
    flex-direction: column;
    gap: 12px;
    padding: 15px 10px;
    border: 2px solid #cb6940;
}

.services-end{
    padding: 0 10px 4px;
    border-top: 0;
}

.service{
    padding: 21px 15px 15px;
    border-radius: 8px;
    box-shadow: 0 1px 3px rgba(0, 0, 0, .2);
}

.service-tail{
    height: 4px;
    background-color: transparent;
}

.service-head{
    display: flex;
    align-items: center;
    justify-content: space-between;
    height: 32px;
    margin-bottom: 6px;
    padding-right: 5px;
    font-size: 24px;
    font-weight: 500;
}

.fields{
    display: flex;
    gap: 30px;
}

.fields div{
    flex: 1;
}

.fields label{
    display: block;
    margin-bottom: 9px;
}

.line{
    display: flex;
    justify-content: space-between;
    margin-top: 11px;
    font-size: 21px;
}

.line + .line{
    margin-top: 19px;
}

.switch{
    position: relative;
    width: 58px;
    height: 30px;
    margin: 0;
    appearance: none;
}

.switch::before{
    content: "";
    position: absolute;
    top: 4px;
    left: 12px;
    width: 35px;
    height: 22px;
    border-radius: 11px;
    background: #b9b9b9;
}

.switch::after{
    content: "";
    position: absolute;
    top: 0;
    left: 0;
    width: 30px;
    height: 30px;
    border-radius: 50%;
    background: #efefef;
    box-shadow: 0 1px 3px rgba(0, 0, 0, .4);
}

.switch:checked::before{
    background: #d0e2f6;
}

.switch:checked::after{
    left: 28px;
    background: #478bdb;
}

.summary{
    padding: 6px 13px 3px;
    font-size: 25px;
    line-height: 49px;
}

.sum{
    display: flex;
    justify-content: space-between;
}

.discount{
    display: flex;
    align-items: center;
    height: 34px;
    margin-top: 15px;
    padding-right: 6px;
}

.discount input{
    width: 120px;
    padding: 0;
    border: 0;
    background: none;
    text-align: right;
    font-weight: 500;
    line-height: 34px;
}

.cursor{
    width: 2px;
    height: 34px;
    background: #4f86b8;
}

.submit{
    display: block;
    width: calc(100% + 18px);
    height: 60px;
    margin: 18px -9px 0;
    border: 0;
    background: #db5826;
    color: #fdeadb;
    font-size: 24px;
}
```
